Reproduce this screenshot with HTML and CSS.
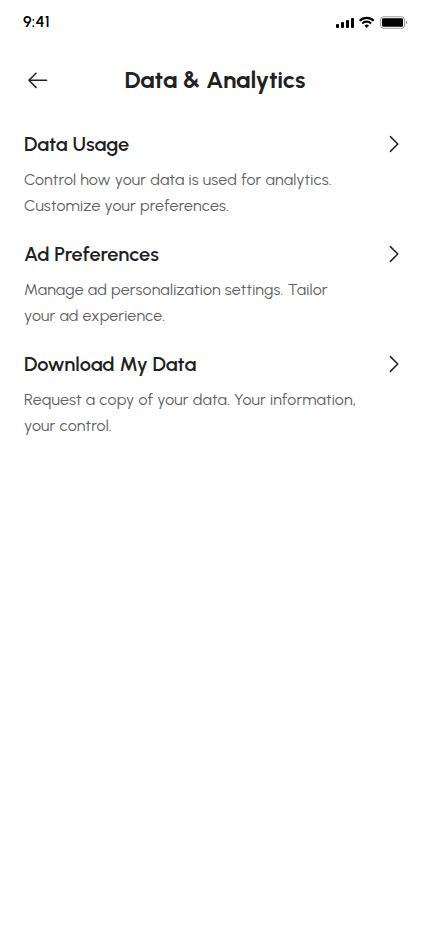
FILE: index.html
```html
<!DOCTYPE html>
<html lang="en">
<head>
<meta charset="utf-8">
<meta name="viewport" content="width=device-width, initial-scale=1">
<title>Data &amp; Analytics</title>
<link rel="stylesheet" href="styles.css">
</head>
<body>
<div class="status">
  <span class="time">9:41</span>
  <svg class="indicators" width="72" height="14" viewBox="0 0 72 14">
    <rect x="0" y="9" width="3" height="4" rx="1"/>
    <rect x="5" y="7" width="3" height="6" rx="1"/>
    <rect x="10" y="5" width="3" height="8" rx="1"/>
    <rect x="15" y="3" width="3" height="10" rx="1"/>
    <g fill="none" stroke="#000" stroke-width="2.1"><path d="M23.7 5.7a10 10 0 0 1 14 0M26.3 8.4a6.4 6.4 0 0 1 8.8 0"/></g>
    <path d="M28.4 10.6a3.5 3.5 0 0 1 4.6 0l-2.3 2.3z"/>
    <rect x="44.5" y="1.8" width="24" height="11.5" rx="3" fill="none" stroke="#000" stroke-opacity=".4"/>
    <rect x="46" y="3.3" width="21" height="8.5" rx="1.3"/>
    <path d="M69.8 5.6v4a2.2 2.2 0 0 0 0-4" fill-opacity=".4"/>
  </svg>
</div>
<header class="header">
  <svg class="back" width="28" height="28" viewBox="0 0 28 28"><path d="M22.6 14.3H4.9M12 7.2L4.9 14.3l7.1 7.1"/></svg>
  <h1>Data &amp; Analytics</h1>
</header>
<main class="list">
  <section class="item">
    <div class="row"><h2>Data Usage</h2><svg class="chevron" width="24" height="24" viewBox="0 0 24 24"><path d="M8.4 4.6l7.4 7.4-7.4 7.4"/></svg></div>
    <p>Control how your data is used for analytics.<br>Customize your preferences.</p>
  </section>
  <section class="item">
    <div class="row"><h2>Ad Preferences</h2><svg class="chevron" width="24" height="24" viewBox="0 0 24 24"><path d="M8.4 4.6l7.4 7.4-7.4 7.4"/></svg></div>
    <p>Manage ad personalization settings. Tailor<br>your ad experience.</p>
  </section>
  <section class="item">
    <div class="row"><h2>Download My Data</h2><svg class="chevron" width="24" height="24" viewBox="0 0 24 24"><path d="M8.4 4.6l7.4 7.4-7.4 7.4"/></svg></div>
    <p>Request a copy of your data. Your information,<br>your control.</p>
  </section>
</main>
</body>
</html>
```
FILE: styles.css
```css
* { box-sizing: border-box; }
body { margin: 0; min-height: 100vh; background: #fff; color: #212121; font-family: Urbanist, Lato, sans-serif; }
h1, h2, p { margin: 0; }
.status { height: 44px; padding: 0 22px 0 23px; display: flex; align-items: center; justify-content: space-between; }
.time { font-size: 16px; line-height: 20px; font-weight: 600; letter-spacing: .2px; color: #000; }
.header { height: 72px; padding: 0 24px; display: grid; grid-template-columns: 28px 1fr 28px; align-items: center; }
.header h1 { font-size: 24px; line-height: 32px; font-weight: 700; text-align: center; white-space: nowrap; }
.back, .chevron { fill: none; stroke: #212121; stroke-width: 1.5; stroke-linecap: round; stroke-linejoin: round; }
.list { padding: 12px 24px; display: flex; flex-direction: column; gap: 20px; }
.item { height: 90px; }
.row { height: 32px; display: flex; align-items: center; justify-content: space-between; }
.row h2 { font-size: 20px; line-height: 32px; font-weight: 600; white-space: nowrap; }
.item p { margin-top: 7px; font-size: 16px; line-height: 26px; font-weight: 400; letter-spacing: .2px; color: #616161; white-space: nowrap; }
```
